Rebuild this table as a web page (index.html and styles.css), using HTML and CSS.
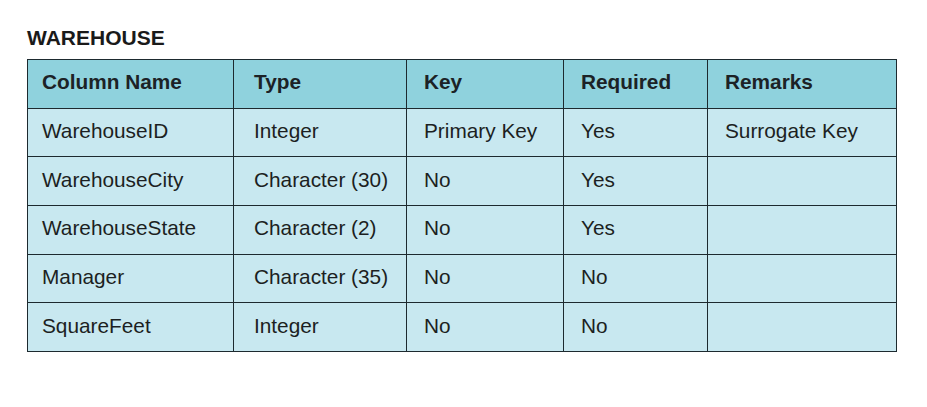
FILE: index.html
```html
<!DOCTYPE html>
<html>
<head>
<meta charset="utf-8">
<link rel="stylesheet" href="styles.css">
</head>
<body>
<div class="page">
  <h1 class="title">WAREHOUSE</h1>
  <table class="spec">
    <colgroup>
      <col class="c1"><col class="c2"><col class="c3"><col class="c4"><col class="c5">
    </colgroup>
    <thead>
      <tr><th>Column Name</th><th class="type">Type</th><th>Key</th><th>Required</th><th>Remarks</th></tr>
    </thead>
    <tbody>
      <tr><td>WarehouseID</td><td class="type">Integer</td><td>Primary Key</td><td>Yes</td><td>Surrogate Key</td></tr>
      <tr><td>WarehouseCity</td><td class="type">Character (30)</td><td>No</td><td>Yes</td><td></td></tr>
      <tr><td>WarehouseState</td><td class="type">Character (2)</td><td>No</td><td>Yes</td><td></td></tr>
      <tr><td>Manager</td><td class="type">Character (35)</td><td>No</td><td>No</td><td></td></tr>
      <tr><td>SquareFeet</td><td class="type">Integer</td><td>No</td><td>No</td><td></td></tr>
    </tbody>
  </table>
</div>
</body>
</html>
```

FILE: styles.css
```css
html, body {
  margin: 0;
  padding: 0;
  background: #ffffff;
}
.page {
  padding: 26px 0 0 27px;
  font-family: "Liberation Sans", Arial, sans-serif;
  color: #1c1f22;
}
.title {
  margin: 0 0 9px 0;
  font-size: 21px;
  line-height: 24px;
  font-weight: bold;
  color: #1a1a1a;
}
.spec {
  border-collapse: collapse;
  table-layout: fixed;
  width: 869px;
  font-size: 20.8px;
}
.c1 { width: 206px; }
.c2 { width: 173px; }
.c3 { width: 157px; }
.c4 { width: 144px; }
.c5 { width: 189px; }
.spec th, .spec td {
  border: 1px solid #1d2a2f;
  text-align: left;
  padding: 0 0 3px 15px;
  height: 48.7px;
  box-sizing: border-box;
  white-space: nowrap;
}
.spec th {
  background: #8fd2dd;
  font-weight: bold;
  color: #1c2226;
}
.spec td {
  background: #c8e8f0;
  font-weight: normal;
}
.spec th:nth-child(n+3), .spec td:nth-child(n+3) {
  padding-left: 17px;
}
.spec .type {
  padding-left: 20px;
}
.spec th:first-child, .spec td:first-child {
  padding-left: 14px;
}
```
